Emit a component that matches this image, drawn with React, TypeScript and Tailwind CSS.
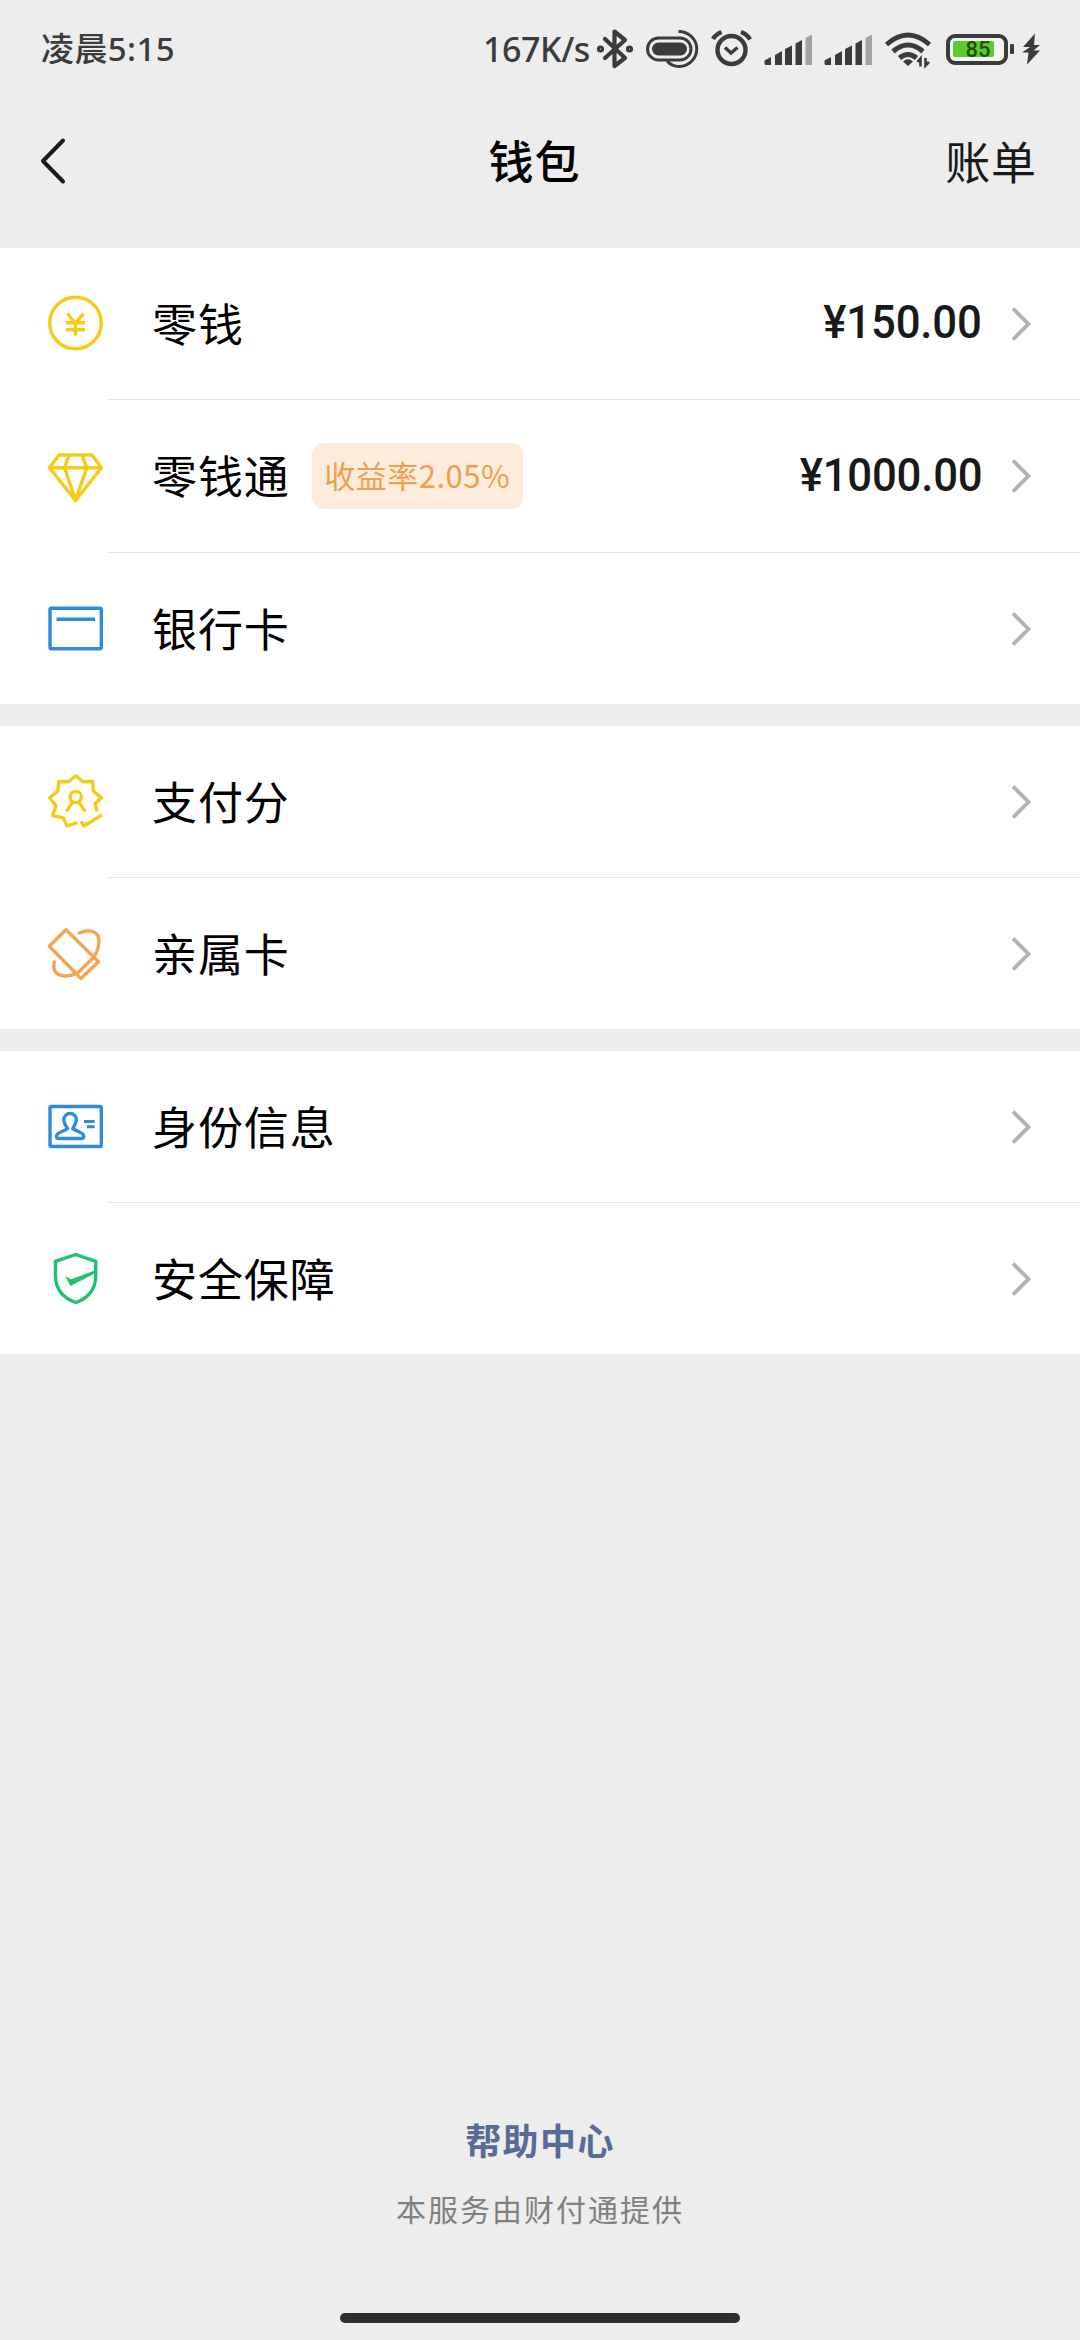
import type { ReactNode } from "react";

const YELLOW = "#f5cb16";
const BLUE = "#2f8cdc";
const ORANGE = "#f2a654";
const GREEN = "#1fc173";
const DARK = "#3b3b3b";

function RowIcon({ y, h = 61, color, children }: { y: number; h?: number; color: string; children: ReactNode }) {
  return (
    <svg
      width={61}
      height={h}
      viewBox={`45 ${y} 61 ${h}`}
      fill="none"
      stroke={color}
      strokeWidth={3.4}
      strokeLinejoin="round"
      className="ml-[45px] shrink-0"
    >
      {children}
    </svg>
  );
}

const icons = {
  coin: (
    <RowIcon y={293} color={YELLOW}>
      <circle cx={75.5} cy={323} r={25.8} />
      <path d="M67.5 313.5 75.5 323.5 83.5 313.5M75.5 323v12.5M66 322.8h19M66 329.8h19" />
    </RowIcon>
  ),
  gem: (
    <RowIcon y={446} h={60} color={YELLOW}>
      <path d="M59 455H92L101.5 467.7 75.5 500.5 49.5 467.7ZM49.5 467.7H101.5M69 455 64.5 467.7 75.5 500 86.8 467.7 82 455" />
    </RowIcon>
  ),
  card: (
    <RowIcon y={598} color={BLUE}>
      <rect x={50} y={608.3} width={51.3} height={40.5} rx={1.5} />
      <path d="M56.5 619.3H95" />
    </RowIcon>
  ),
  score: (
    <RowIcon y={771} color={YELLOW}>
      <path d="M97 811.5 95 803.8 101.5 797.8 93.3 791 92.5 781.5 83 781.7 75.7 775.7 68.5 781.7 58.7 781.5 58 791 49.7 797.8 56 806 52.6 815.5 63.3 817.8 67 826 77.5 822.6" />
      <path d="M81 821.3 84 826 101.8 815M84 826 87 822.5" />
      <circle cx={75.7} cy={797} r={5.6} />
      <path d="M73 801.8 66.3 811.5M78.5 801.8 85.2 811.5" />
    </RowIcon>
  ),
  family: (
    <RowIcon y={923} color={ORANGE}>
      <path d="M66 929.7 98.5 961.7 81 978.5 49.3 946.2Z" />
      <path d="M78 933.700C88 928.500 98.500 930 99 941C99 947 97 952 94 957L77 973.500M76 973.500C68 977.500 55 977 54 968C53.700 965 54 963 54.500 960.500" />
    </RowIcon>
  ),
  identity: (
    <RowIcon y={1096} color={BLUE}>
      <rect x={50} y={1106.5} width={51.3} height={40} rx={1.5} />
      <path d="M67.5 1128.5C65.500 1125.500 63.800 1123 63.800 1119.800A6.300 6.300 0 0 1 76.400 1119.800C76.400 1123 74.500 1125.500 72.800 1128.500C76 1131.500 83.700 1132 83.700 1136.200C83.700 1138 82.700 1138.500 81.500 1138.500H59C57.500 1138.500 56.500 1138 56.500 1136.200C56.500 1132 64.500 1131.500 67.500 1128.500Z" />
      <path d="M84 1121.500H94.700M87 1126.800H94.700" strokeWidth={3} />
    </RowIcon>
  ),
  shield: (
    <RowIcon y={1248} color={GREEN}>
      <path d="M75.700 1254.500 95.700 1261.300V1276C95.700 1290 87 1299 75.700 1302.500C64.500 1299 55.500 1290 55.500 1276V1261.300Z" />
      <path d="M66 1276.800 71 1279.800 95 1270.800V1273L70.500 1285.500Z" fill={GREEN} stroke={GREEN} strokeWidth={0.800} />
    </RowIcon>
  ),
};

type RowProps = { icon: ReactNode; label: string; tag?: string; amount?: string; height: string; last?: boolean };

function Row({ icon, label, tag, amount, height, last }: RowProps) {
  return (
    <div className={`relative flex items-center bg-white ${height}`}>
      {icon}
      <span className="mb-[2px] ml-[46px] text-[45px] leading-[60px] tracking-[0.9px] text-black">{label}</span>
      {tag && (
        <span className="ml-[22px] flex h-[66px] w-[211px] items-center justify-center rounded-[11px] bg-[#fdecdb] pb-[2px] text-[31px] tracking-[0.5px] text-[#f0a04b]">
          {tag}
        </span>
      )}
      {amount && (
        <span className="mb-[3px] ml-auto origin-right scale-x-[0.95] font-['Roboto','Noto_Sans_CJK_SC',sans-serif] text-[46px] leading-[60px] font-medium tracking-[-0.2px] text-[#191919]">
          {amount}
        </span>
      )}
      <svg width={24} height={40} viewBox="0 0 24 40" fill="none" stroke="#b2b2b2" strokeWidth={3.8} className={`mr-[46px] shrink-0 ${amount ? "ml-[28px]" : "ml-auto"}`}>
        <path d="M3 4.500 18.500 20 3 35.500" />
      </svg>
      {!last && <div className="absolute right-0 bottom-0 left-[108px] h-px bg-[#e3e3e3]" />}
    </div>
  );
}

function Signal() {
  return (
    <svg width={60} height={50} viewBox="761 23 60 50" fill={DARK}>
      <path d="M764.500 59.500 771 56V64H766Q764.500 64 764.500 62.500ZM775 54 782 50V64H775ZM785 48 792 44.500V64H785ZM795.500 42.500 802 39V64H795.500Z" />
      <path d="M805.500 37 812 33.500V64H805.500Z" fill="#a3a3a3" />
    </svg>
  );
}

function StatusBar() {
  return (
    <header className="flex h-[98px] items-center font-['Noto_Sans','Noto_Sans_CJK_SC',sans-serif] text-[#3b3b3b]">
      <span className="ml-[41px] text-[33px] font-medium tracking-[0.4px]">凌晨5:15</span>
      <div className="ml-auto flex items-center">
        <span className="mr-[5px] text-[34px] font-medium tracking-[-0.4px]">167K/s</span>
        <svg width={46} height={50} viewBox="595 23 46 50" fill="none" stroke={DARK} strokeWidth={4.2} strokeLinejoin="round" strokeLinecap="round">
          <path d="M605 38 625 57 614.500 65V30.500L625 39 605 57" />
          <circle cx={600.500} cy={48} r={1.500} />
          <circle cx={629.500} cy={48} r={1.500} />
        </svg>
        <svg width={66} height={50} viewBox="641 23 66 50" fill="none" stroke={DARK} strokeWidth={3}>
          <rect x={647.500} y={37} width={43.500} height={22} rx={11} />
          <rect x={652} y={41.500} width={35} height={13} rx={6.500} fill={DARK} stroke="none" />
          <path d="M678.500 30.500A18 17.500 0 0 1 679 65.500Q672 65.500 667 60" />
        </svg>
        <svg width={54} height={50} viewBox="707 23 54 50" fill="none" stroke={DARK} strokeWidth={4.4}>
          <circle cx={731.500} cy={49} r={14} />
          <path d="M725 46.500 731 52 737.500 46.500" strokeWidth={3.400} />
          <path d="M713 38Q715.500 33.500 721.500 31M741 31Q747.500 33.500 750 38.500" />
        </svg>
        <Signal />
        <Signal />
        <svg width={60} height={50} viewBox="881 23 60 50" fill="none" stroke={DARK} strokeWidth={5}>
          <path d="M886.500 43.500Q908 24.500 929.500 43.500M893 50.500Q908 37.500 923 50.500M899.500 57Q908 50 916.500 57" />
          <path d="M903 60.500Q908 56 913 60.500L908 65Z" fill={DARK} stroke="none" />
          <path d="M920.500 65.500V57.500L917.500 61M925.500 57V64.500L929 61" strokeWidth={2.600} />
        </svg>
        <div className="relative ml-[5px] h-[31px] w-[62px] rounded-[9px] border-4 border-[#3b3b3b] bg-[#f3f3f3]">
          <div className="mt-[3px] ml-[3px] h-[16px] w-[41px] rounded-[2px] bg-[#5fc92c]" />
          <span className="absolute inset-0 flex items-center justify-center pt-[1px] pl-[2px] font-['Roboto',sans-serif] text-[22px] leading-none font-medium text-[#1b5210]">85</span>
        </div>
        <div className="ml-[2px] h-[10px] w-[4px] rounded-[1px] bg-[#3b3b3b]" />
        <svg width={20} height={34} viewBox="1021 31 20 34" fill={DARK} className="mr-[39px] ml-[7px]">
          <path d="M1035 32.500 1023 46H1030L1022 51.500H1028.500L1027 63.500 1040 49.500H1033.500L1040 44H1034Z" />
        </svg>
      </div>
    </header>
  );
}

export default function App() {
  return (
    <div className="flex h-[2340px] w-[1080px] flex-col overflow-hidden bg-[#ededed] font-['Noto_Sans_CJK_SC',sans-serif]">
      <StatusBar />
      <nav className="grid h-[150px] grid-cols-3 items-start">
        <svg width={40} height={52} viewBox="35 135 40 52" fill="none" stroke="#191919" strokeWidth={4} strokeLinecap="round" strokeLinejoin="round" className="mt-[37px] ml-[35px]">
          <path d="M63 140.500 43 161 63 181.500" />
        </svg>
        <h1 className="mt-[32px] mr-[11px] text-center text-[45px] leading-[60px] font-medium tracking-[0.900px] text-black">钱包</h1>
        <span className="mt-[33px] mr-[43px] text-right text-[45px] leading-[60px] tracking-[0.900px] text-[#191919]">账单</span>
      </nav>
      <main className="flex flex-col gap-[22px]">
        <section>
          <Row icon={icons.coin} label="零钱" amount="¥150.00" height="h-[152px] pb-px" />
          <Row icon={icons.gem} label="零钱通" tag="收益率2.05%" amount="¥1000.00" height="h-[153px] pb-px" />
          <Row icon={icons.card} label="银行卡" height="h-[151px]" last />
        </section>
        <section>
          <Row icon={icons.score} label="支付分" height="h-[152px] pb-px" />
          <Row icon={icons.family} label="亲属卡" height="h-[151px]" last />
        </section>
        <section>
          <Row icon={icons.identity} label="身份信息" height="h-[152px] pb-px" />
          <Row icon={icons.shield} label="安全保障" height="h-[151px]" last />
        </section>
      </main>
      <footer className="mt-auto flex flex-col items-center">
        <a className="text-[36px] leading-[50px] font-bold tracking-[1.400px] text-[#576b95]">帮助中心</a>
        <p className="mt-[24px] text-[30px] leading-[40px] tracking-[2px] text-[#808080]">本服务由财付通提供</p>
        <div className="mt-[85px] mb-[17px] h-[10px] w-[400px] rounded-full bg-[#2e2e2e]" />
      </footer>
    </div>
  );
}
